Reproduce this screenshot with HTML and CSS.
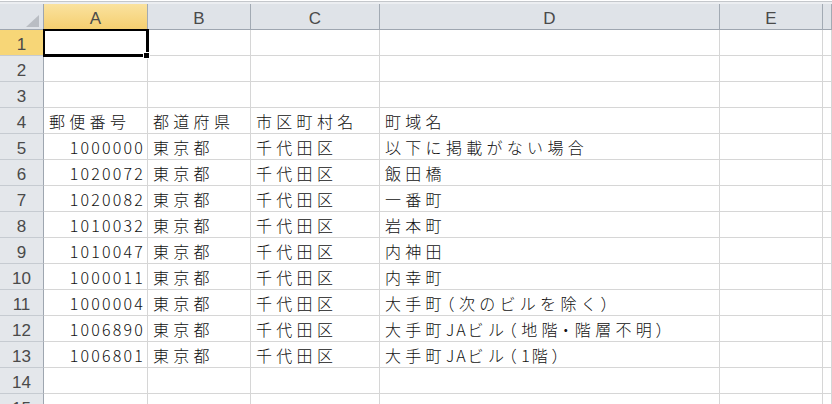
FILE: index.html
```html
<!DOCTYPE html>
<html>

<head>
    <meta http-equiv="Content-Type" content="text/html;charset=utf-8">
    <title>Book1</title>
    <link rel="stylesheet" href="styles.css">
</head>

<body>
    <div class="topline"></div>

    <div class="sheet">
        <!-- column headers -->
        <div class="corner">
            <svg width="44" height="25" viewBox="0 0 44 25">
                <polygon points="39,11 39,23 26,23" fill="#b9bdc3" />
            </svg>
        </div>
        <div class="colhead active">A</div>
        <div class="colhead">B</div>
        <div class="colhead">C</div>
        <div class="colhead">D</div>
        <div class="colhead">E</div>
        <div class="colhead"></div>

        <div class="rowhead active">1</div>
        <div class="cell selected"><span class="handle"></span></div>
        <div class="cell"></div><div class="cell"></div><div class="cell"></div><div class="cell"></div><div class="cell"></div>

        <div class="rowhead">2</div>
        <div class="cell"></div><div class="cell"></div><div class="cell"></div><div class="cell"></div><div class="cell"></div><div class="cell"></div>

        <div class="rowhead">3</div>
        <div class="cell"></div><div class="cell"></div><div class="cell"></div><div class="cell"></div><div class="cell"></div><div class="cell"></div>

        <div class="rowhead">4</div>
        <div class="cell">郵便番号</div>
        <div class="cell">都道府県</div>
        <div class="cell">市区町村名</div>
        <div class="cell">町域名</div>
        <div class="cell"></div><div class="cell"></div>

        <div class="rowhead">5</div>
        <div class="cell num">1000000</div>
        <div class="cell">東京都</div>
        <div class="cell">千代田区</div>
        <div class="cell">以下に掲載がない場合</div>
        <div class="cell"></div><div class="cell"></div>

        <div class="rowhead">6</div>
        <div class="cell num">1020072</div>
        <div class="cell">東京都</div>
        <div class="cell">千代田区</div>
        <div class="cell">飯田橋</div>
        <div class="cell"></div><div class="cell"></div>

        <div class="rowhead">7</div>
        <div class="cell num">1020082</div>
        <div class="cell">東京都</div>
        <div class="cell">千代田区</div>
        <div class="cell">一番町</div>
        <div class="cell"></div><div class="cell"></div>

        <div class="rowhead">8</div>
        <div class="cell num">1010032</div>
        <div class="cell">東京都</div>
        <div class="cell">千代田区</div>
        <div class="cell">岩本町</div>
        <div class="cell"></div><div class="cell"></div>

        <div class="rowhead">9</div>
        <div class="cell num">1010047</div>
        <div class="cell">東京都</div>
        <div class="cell">千代田区</div>
        <div class="cell">内神田</div>
        <div class="cell"></div><div class="cell"></div>

        <div class="rowhead">10</div>
        <div class="cell num">1000011</div>
        <div class="cell">東京都</div>
        <div class="cell">千代田区</div>
        <div class="cell">内幸町</div>
        <div class="cell"></div><div class="cell"></div>

        <div class="rowhead">11</div>
        <div class="cell num">1000004</div>
        <div class="cell">東京都</div>
        <div class="cell">千代田区</div>
        <div class="cell">大手町<span class="punct">（</span>次のビルを除く<span class="punct">）</span></div>
        <div class="cell"></div><div class="cell"></div>

        <div class="rowhead">12</div>
        <div class="cell num">1006890</div>
        <div class="cell">東京都</div>
        <div class="cell">千代田区</div>
        <div class="cell">大手町<span class="latin">JA</span>ビル<span class="punct">（</span>地階<span class="punct">・</span>階層不明<span class="punct">）</span></div>
        <div class="cell"></div><div class="cell"></div>

        <div class="rowhead">13</div>
        <div class="cell num">1006801</div>
        <div class="cell">東京都</div>
        <div class="cell">千代田区</div>
        <div class="cell">大手町<span class="latin">JA</span>ビル<span class="punct">（</span><span class="latin">1</span>階<span class="punct">）</span></div>
        <div class="cell"></div><div class="cell"></div>

        <div class="rowhead">14</div>
        <div class="cell"></div><div class="cell"></div><div class="cell"></div><div class="cell"></div><div class="cell"></div><div class="cell"></div>

        <div class="rowhead">15</div>
        <div class="cell"></div><div class="cell"></div><div class="cell"></div><div class="cell"></div><div class="cell"></div><div class="cell"></div>
    </div>
</body>

</html>
```

FILE: styles.css
```css
body {
    margin: 0;
    background: #fff;
    overflow: hidden;
    height: 404px;
}

.topline {
    height: 4px;
    box-sizing: border-box;
    border-top: 1px solid #fff;
    background: linear-gradient(#c4c7cb 0, #c4c7cb 1px, #eceef1 1px);
}

.sheet {
    display: grid;
    grid-template-columns: 44px 104px 103px 129px 340px 103px 1fr;
    grid-auto-rows: 26px;
    font-family: "Noto Sans CJK JP", sans-serif;
    font-size: 16px;
    font-weight: 300;
    color: #111;
}

.sheet > div {
    box-sizing: border-box;
    overflow: hidden;
    white-space: nowrap;
}

.corner {
    background: #dfe3e8;
    border-right: 1px solid #9ea6b0;
    border-bottom: 1px solid #9ea6b0;
}

.corner svg {
    display: block;
}

.colhead,
.rowhead {
    font-family: "Liberation Sans", Arial, sans-serif;
    font-size: 17px;
    font-weight: normal;
    color: #4a4a4a;
    text-align: center;
    line-height: 20px;
    padding-top: 5px;
}

.colhead {
    background: #dfe3e8;
    border-right: 1px solid #a2aab3;
    border-bottom: 1px solid #9ea6b0;
}

.rowhead {
    background: #e4e7eb;
    border-right: 1px solid #9ea6b0;
    border-bottom: 1px solid #c6cbd1;
}

.colhead.active {
    background: linear-gradient(#fae29f, #f5cf70);
    border-bottom-color: #c9a14a;
}

.rowhead.active {
    background: #f7d677;
}

.cell {
    border-right: 1px solid #d6d6d6;
    border-bottom: 1px solid #d6d6d6;
    padding: 2px 0 0 5px;
    line-height: 22px;
    letter-spacing: 4.3px;
}

.cell.num {
    text-align: right;
    padding: 2px 2px 0 0;
    letter-spacing: 2.2px;
}

.latin {
    letter-spacing: 2px;
}

/* brackets and middle dot are proportional, as in a P-gothic face */
.punct {
    font-feature-settings: "palt";
    letter-spacing: 5px;
}

.selected {
    position: relative;
    overflow: visible !important;
    z-index: 2;
}

.selected::after {
    content: "";
    position: absolute;
    left: -1px;
    top: -1px;
    right: -2px;
    bottom: -2px;
    border-style: solid;
    border-color: #000;
    border-width: 2px 3px 3px 2px;
}

.handle {
    position: absolute;
    right: -3px;
    bottom: -4px;
    width: 5px;
    height: 5px;
    background: #000;
    border: 1px solid #fff;
    z-index: 3;
}
```
